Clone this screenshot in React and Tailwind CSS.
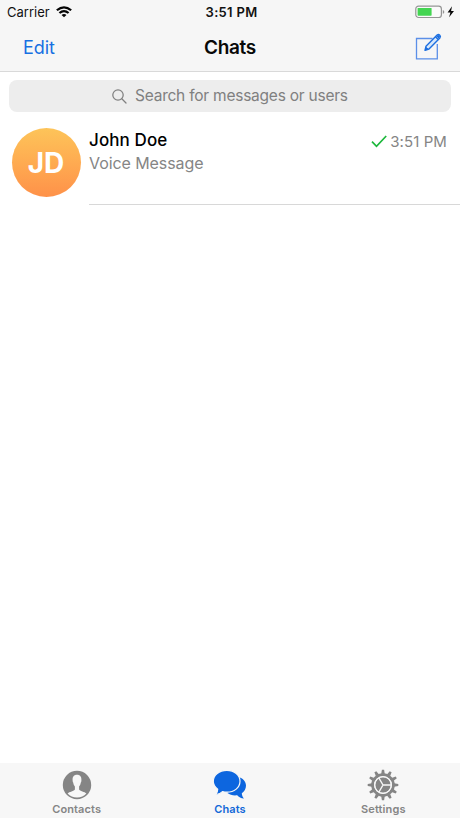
const teeth = Array.from({ length: 12 }, (_, i) => i * 30);

function StatusBar() {
  return (
    <div className="flex h-6 items-center justify-between pl-[7px] pr-[5px] text-[13px] text-[#111]">
      <div className="flex w-[171px] items-center gap-[6px]">
        <span className="pt-px">Carrier</span>
        <svg width="16" height="12" viewBox="0 0 15 12" preserveAspectRatio="none" fill="none" stroke="#050505" strokeWidth="2.1">
          <path d="M.8 4.3Q7.5-1.7 14.2 4.3" />
          <path d="M3.2 7Q7.5 3.1 11.8 7" />
          <path d="M7.5 11.3 5.2 8.9Q7.5 7.1 9.8 8.9Z" fill="#050505" stroke="none" />
        </svg>
      </div>
      <span className="pt-px font-semibold tracking-[0.3px]">3:51 PM</span>
      <div className="flex w-[170px] items-center justify-end">
        <svg width="40" height="14" viewBox="0 0 40 14">
          <rect x=".8" y="1.1" width="25.6" height="11.4" rx="2.8" fill="#fafafa" stroke="#959595" strokeWidth="1.2" />
          <rect x="2.6" y="2.9" width="14" height="7.8" rx=".6" fill="#43d551" />
          <path d="M27.8 5v3.8q1.5-.5 1.5-1.9T27.8 5Z" fill="#959595" />
          <path d="M37 1.3 32.6 7.6h2.8L34.1 12.3 39 5.9h-2.9Z" fill="#080808" />
        </svg>
      </div>
    </div>
  );
}

function NavBar() {
  return (
    <div className="flex h-[46px] items-center justify-between pl-[23px] pr-[18px]">
      <span className="w-[100px] text-[18px] tracking-[-0.1px] text-[#1670e2]">Edit</span>
      <h1 className="pt-[3px] text-[19px] font-semibold tracking-[-0.35px] text-[#080808]">Chats</h1>
      <div className="flex w-[105px] justify-end">
        <svg width="27" height="28" viewBox="0 0 27 28" fill="none" stroke="#1d6fe0">
          <path d="M17.5 5.5H1.5v20.3h20.8V11" stroke="#5b8fe8" strokeWidth="1.3" />
          <path d="M10 17.3 11 13.2 22.1 2.1q1.4-1.1 2.7.1 1.2 1.3.1 2.7L14 16Z" fill="#d6e7fb" strokeWidth="1.4" strokeLinejoin="round" />
          <path d="M20.5 3.8 23.2 6.5" strokeWidth="1.4" />
          <path d="M22.4 2.6 24.4 4.6" strokeWidth="2.4" />
          <path d="M10.3 17 11.2 14.4 12.9 16.1Z" fill="#1d6fe0" />
        </svg>
      </div>
    </div>
  );
}

function SearchBar() {
  return (
    <div className="mx-[9px] mt-2 flex h-8 items-center gap-2 rounded-[8px] bg-[#ededed] pl-[103px] text-[#808080]">
      <svg width="15" height="15" viewBox="0 0 15 15" fill="none" stroke="#808080" strokeWidth="1.25" strokeLinecap="round">
        <circle cx="6" cy="6" r="5.2" />
        <path d="M9.8 9.8 14 14" />
      </svg>
      <span className="pb-px text-[15.5px] tracking-[-0.23px]">Search for messages or users</span>
    </div>
  );
}

function ChatRow() {
  return (
    <div className="flex h-[93px] pl-3">
      <div className="mt-4 flex size-[69px] shrink-0 items-center justify-center rounded-full bg-linear-to-b from-[#fdc459] to-[#fe9149] pr-px text-[28px] font-bold text-white">
        JD
      </div>
      <div className="ml-2 flex flex-1 justify-between border-b border-[#d8d8d8] pr-[13px] pt-4">
        <div>
          <div className="text-[17px] font-medium leading-6 tracking-[0.1px] text-black">John Doe</div>
          <div className="text-[16px] leading-[22px] tracking-[-0.08px] text-[#858585]">Voice Message</div>
        </div>
        <div className="flex h-[27px] items-center gap-[3px] text-[#858585]">
          <svg width="16" height="13" viewBox="0 0 16 13" fill="none" stroke="#1db83c" strokeWidth="1.7">
            <path d="M1 6.6 5.5 11.3 15.2 1" />
          </svg>
          <span className="pt-px text-[15px] tracking-[0.1px]">3:51 PM</span>
        </div>
      </div>
    </div>
  );
}

function ContactIcon() {
  return (
    <svg width="30" height="30" viewBox="0 0 30 30">
      <circle cx="15" cy="15" r="14.2" fill="#858585" />
      <path d="M15 4.8c-3.2 0-4.6 2.1-4.4 5.1 0 1.5.3 2.1.6 2.6.2 2 1 3.1 1.7 3.9v3c-.5 1.8-5.8 2.1-7.3 4.1Q9.2 27.6 15 27.6t9.4-4.1c-1.5-2-6.8-2.3-7.3-4.1v-3c.7-.8 1.5-1.9 1.7-3.9.4-.5.6-1.1.6-2.6.2-3-1.2-5.1-4.4-5.1Z" fill="#f7f7f7" />
    </svg>
  );
}

function ChatsIcon() {
  return (
    <svg width="34" height="30" viewBox="0 0 34 30" fill="#0d66df">
      <path d="M20 6.5c7-.8 13 3.2 13 9 0 3.3-1.6 6-4.2 7.7.1 2.2.9 3.9 2.2 5.3-3.1-.1-5.2-1.2-6.8-3.2-3.8.4-7.2-.2-9.7-2.2Z" />
      <path d="M13.8.3C21.3.3 27 5 27 11.3s-5.7 10.9-13.2 10.9c-1.6 0-3-.2-4.3-.6-1.7 1.7-3.9 2.9-6.7 2.9 1.1-1.4 1.9-3 1.9-5.3C2.2 17.3.3 14.6.3 11.3.3 5 6.3.3 13.8.3Z" stroke="#f7f7f7" strokeWidth="1.2" />
    </svg>
  );
}

function SettingsIcon() {
  return (
    <svg width="32" height="32" viewBox="0 0 32 32" fill="none" stroke="#858585">
      {teeth.map((angle) => (
        <path key={angle} d="M14.2 5 14.9.7h2.2l.7 4.3Z" fill="#858585" stroke="none" transform={`rotate(${angle} 16 16)`} />
      ))}
      <circle cx="16" cy="16" r="10.4" strokeWidth="2.8" />
      <circle cx="16" cy="16" r="7.7" fill="#858585" stroke="none" />
      <path d="M16 16h8M16 16 12 9.1M16 16l-4 6.9" stroke="#f7f7f7" strokeWidth="1.4" />
      <circle cx="16" cy="16" r="8.4" stroke="#f7f7f7" strokeWidth="1.1" />
    </svg>
  );
}

function Tab({ label, className, children }) {
  return (
    <div className={`flex flex-1 flex-col items-center ${className}`}>
      <div className="flex h-8 items-center">{children}</div>
      <span className="pt-px text-[11px] font-semibold leading-[14px] tracking-[0.1px]">{label}</span>
    </div>
  );
}

export default function App() {
  return (
    <div className="flex h-[818px] w-[460px] flex-col overflow-hidden bg-white font-['Inter',sans-serif]">
      <header className="h-[72px] shrink-0 border-b border-[#d9d9d9] bg-[#f6f6f6]">
        <StatusBar />
        <NavBar />
      </header>
      <main className="flex-1">
        <SearchBar />
        <ChatRow />
      </main>
      <nav className="flex h-[55px] shrink-0 bg-[#f7f7f7] pt-[6px]">
        <Tab label="Contacts" className="text-[#858585]"><ContactIcon /></Tab>
        <Tab label="Chats" className="text-[#1268d8]"><ChatsIcon /></Tab>
        <Tab label="Settings" className="text-[#858585]"><SettingsIcon /></Tab>
      </nav>
    </div>
  );
}
